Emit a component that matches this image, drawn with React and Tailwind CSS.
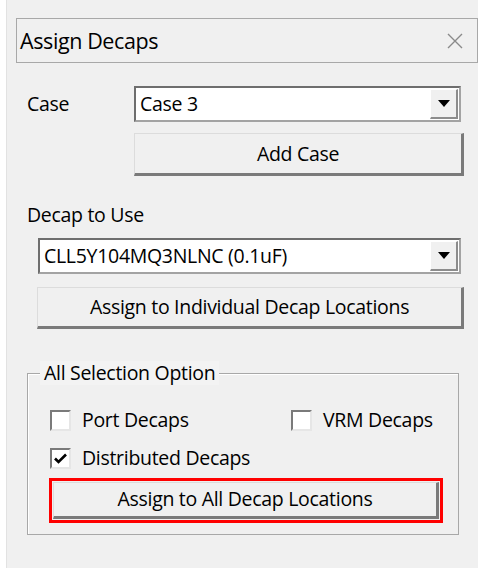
import React, { useState } from "react";

const font = { fontFamily: '"Open Sans", "Noto Sans", "Liberation Sans", sans-serif' };

function Combo({ value, className }) {
  return (
    <div
      className={`flex items-stretch bg-white border-2 border-t-[#6e6e6e] border-l-[#6e6e6e] border-r-[#a3a3a3] border-b-[#a3a3a3] ${className}`}
    >
      <div className="flex-1 flex items-center pl-[4px] text-[19.5px] text-black tracking-[-0.3px] leading-none">
        {value}
      </div>
      <div className="w-[28px] my-[1px] mr-[1px] flex items-center justify-center bg-[#f0f0f0] border-r-2 border-b-2 border-[#8c8c8c] border-t border-l border-t-white border-l-white">
        <svg width="12" height="7" viewBox="0 0 12 7">
          <path d="M0 0h12L6 7z" fill="#000" />
        </svg>
      </div>
    </div>
  );
}

function Button({ children, className }) {
  return (
    <button
      className={`flex items-center justify-center bg-[#f0f0f0] border-t border-l border-t-[#dcdcdc] border-l-[#dcdcdc] border-r-[3px] border-b-[3px] border-r-[#7a7a7a] border-b-[#7a7a7a] text-[19.5px] text-black tracking-[-0.3px] leading-none ${className}`}
    >
      {children}
    </button>
  );
}

function Check({ label, checked, onChange, className }) {
  return (
    <label className={`flex items-center cursor-default ${className}`} onClick={onChange}>
      <span className="w-[21px] h-[21px] flex items-center justify-center bg-white border-2 border-t-[#7a7a7a] border-l-[#7a7a7a] border-r-[#e6e6e6] border-b-[#e6e6e6]">
        {checked && (
          <svg width="13" height="11" viewBox="0 0 13 11">
            <path d="M1 5.5l3.5 3.5L12 1.5" stroke="#000" strokeWidth="2.6" fill="none" />
          </svg>
        )}
      </span>
      <span className="ml-[11px] text-[19.5px] text-black tracking-[-0.3px] leading-none">{label}</span>
    </label>
  );
}

export default function App() {
  const [port, setPort] = useState(false);
  const [vrm, setVrm] = useState(false);
  const [dist, setDist] = useState(true);

  return (
    <div className="w-[487px] h-[581px] bg-white" style={font}>
      <div className="ml-[6px] w-[472px] h-[568px] bg-[#f0f0f0] border-l border-[#e2e2e2] flex flex-col">
        <div className="mt-[18px] ml-[9px] w-[462px] h-[45px] flex items-center justify-between border border-[#a8a8a8] bg-[#f0f0f0]">
          <span className="ml-[3px] text-[21.5px] text-black tracking-[-0.4px] leading-none">Assign Decaps</span>
          <svg width="16" height="16" viewBox="0 0 16 16" className="mr-[14px]">
            <path d="M1 1l14 14M15 1L1 15" stroke="#8a8a8a" strokeWidth="1.4" />
          </svg>
        </div>

        <div className="mt-[23px] flex items-center">
          <span className="ml-[20px] w-[107px] text-[19.5px] text-black tracking-[-0.3px] leading-none">Case</span>
          <Combo value="Case 3" className="w-[327px] h-[36px]" />
        </div>

        <Button className="mt-[11px] ml-[127px] w-[330px] h-[43px]">Add Case</Button>

        <span className="mt-[29px] ml-[20px] text-[19.5px] text-black tracking-[-0.3px] leading-none">Decap to Use</span>

        <Combo value="CLL5Y104MQ3NLNC (0.1uF)" className="mt-[13px] ml-[31px] w-[423px] h-[36px]" />

        <Button className="mt-[13px] ml-[30px] w-[427px] h-[42px]">Assign to Individual Decap Locations</Button>

        <div className="mt-[44px] ml-[20px] w-[432px] h-[162px] relative border border-[#a8a8a8] shadow-[inset_1px_1px_0_#fff]">
          <span className="absolute left-[12px] -top-[13px] px-[4px] bg-[#f3f3f3] text-[19.5px] text-black tracking-[-0.3px] leading-[24px]">
            All Selection Option
          </span>
          <div className="mt-[36px] ml-[22px] flex items-center">
            <Check label="Port Decaps" checked={port} onChange={() => setPort(!port)} className="w-[241px]" />
            <Check label="VRM Decaps" checked={vrm} onChange={() => setVrm(!vrm)} />
          </div>
          <div className="mt-[17px] ml-[22px] flex items-center">
            <Check label="Distributed Decaps" checked={dist} onChange={() => setDist(!dist)} />
          </div>
          <div className="mt-[9px] ml-[21px] w-[394px] h-[45px] border-[3px] border-[#ff0000] p-[1px] flex">
            <Button className="flex-1">Assign to All Decap Locations</Button>
          </div>
        </div>
      </div>
    </div>
  );
}
